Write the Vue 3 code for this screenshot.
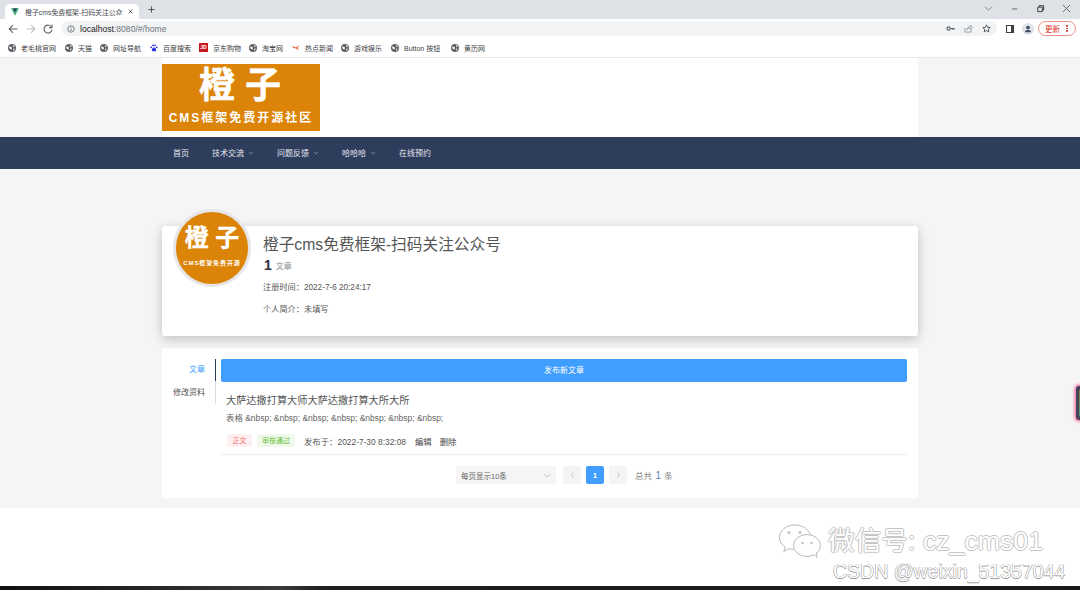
<script setup>
const bookmarks = [
  { name: '老毛桃官网', icon: 'globe', width: 57 },
  { name: '天猫', icon: 'globe', width: 35 },
  { name: '网址导航', icon: 'globe', width: 50 },
  { name: '百度搜索', icon: 'baidu', width: 49 },
  { name: '京东购物', icon: 'jd', width: 50 },
  { name: '淘宝网', icon: 'globe', width: 43 },
  { name: '热点新闻', icon: 'news', width: 49 },
  { name: '游戏娱乐', icon: 'globe', width: 50 },
  { name: 'Button 按钮', icon: 'globe', width: 60 },
  { name: '黄历网', icon: 'globe', width: 40 },
]
const navItems = [
  { name: '首页', width: 39, arrow: false },
  { name: '技术交流', width: 65, arrow: true },
  { name: '问题反馈', width: 65, arrow: true },
  { name: '哈哈哈', width: 57, arrow: true },
  { name: '在线预约', width: 40, arrow: false },
]
const nbsp = '表格 &nbsp; &nbsp; &nbsp; &nbsp; &nbsp; &nbsp; &nbsp;'
</script>

<template>
  <div class="screen">
    <header class="browser">
      <div class="tabstrip">
        <div class="tab">
          <svg class="vue-icon" viewBox="0 0 12 11"><path d="M0 0h12L6 11z" fill="#41b883" /><path d="M2.600 0h6.800L6 6.200z" fill="#35495e" /></svg>
          <span class="tab-title">橙子cms免费框架-扫码关注公众</span>
          <svg class="tab-close" viewBox="0 0 8 8"><path d="M1 1l6 6M7 1L1 7" stroke="#3c4043" stroke-width="1.200" /></svg>
        </div>
        <svg class="new-tab" viewBox="0 0 10 10"><path d="M5 .5v9M.5 5h9" stroke="#3c4043" stroke-width="1.200" /></svg>
        <div class="window-btns">
          <svg viewBox="0 0 10 10"><path d="M1 3l4 4 4-4" fill="none" stroke="#80868b" /></svg>
          <svg viewBox="0 0 10 10"><path d="M2 5.500h6" stroke="#5f6368" /></svg>
          <svg viewBox="0 0 10 10"><path d="M2 3.500h5v5H2zM3.500 3.500V1.800h5v5H7" fill="none" stroke="#3c4043" stroke-width="1.100" /></svg>
          <svg viewBox="0 0 10 10"><path d="M1 1l8 8M9 1L1 9" stroke="#5f6368" /></svg>
        </div>
      </div>
      <div class="toolbar">
        <svg class="tool" viewBox="0 0 10 10"><path d="M9.500 5H1.500M5 1.200L1.200 5 5 8.800" fill="none" stroke="#5f6368" stroke-width="1.100" /></svg>
        <svg class="tool" viewBox="0 0 10 10"><path d="M.5 5h8M5 1.200L8.800 5 5 8.800" fill="none" stroke="#bdc1c6" stroke-width="1.100" /></svg>
        <svg class="tool" viewBox="0 0 10 10"><path d="M9 5.500A4 4 0 1 1 8 2.400M9 .6v3H6" fill="none" stroke="#5f6368" stroke-width="1.100" /></svg>
        <div class="address">
          <svg class="info" viewBox="0 0 10 10"><circle cx="5" cy="5" r="4" fill="none" stroke="#5f6368" /><path d="M5 4.300V7.500M5 2.500v1" stroke="#5f6368" /></svg>
          <span class="url"><b>localhost</b>:8080/#/home</span>
          <span class="address-tools">
            <svg viewBox="0 0 10 10"><circle cx="2.800" cy="5" r="1.800" fill="none" stroke="#5f6368" stroke-width="1.300" /><path d="M4.500 5H9.500M7.500 5v1.500M9 5v1.500" stroke="#5f6368" stroke-width="1.200" /></svg>
            <svg viewBox="0 0 10 10"><path d="M1 4.500V9h7V6.500M3 6.500C3.500 4 5 3 7 3V1.200L9.500 3.800 7 6.200V4.500C5.500 4.500 4 5 3 6.500z" fill="none" stroke="#80868b" stroke-width=".8" /></svg>
            <svg viewBox="0 0 10 10"><path d="M5 1l1.200 2.700 2.900.3-2.200 1.900.7 2.900L5 7.300 2.400 8.800l.7-2.900L.9 4l2.900-.3z" fill="none" stroke="#3c4043" stroke-width=".9" /></svg>
          </span>
        </div>
        <svg class="side-panel" viewBox="0 0 10 10"><path d="M1.500 1.500h7v7h-7z" fill="none" stroke="#3c4043" stroke-width="1.100" /><path d="M6 1.500h2.500v7H6z" fill="#3c4043" /></svg>
        <svg class="avatar-mini" viewBox="0 0 12 12"><circle cx="6" cy="6" r="6" fill="#dfe3ea" /><circle cx="6" cy="4.600" r="1.800" fill="#3c4a63" /><path d="M2.800 9.200C3 7.500 4.500 7 6 7s3 .5 3.200 2.200z" fill="#3c4a63" /></svg>
        <div class="update">更新<span class="dots"><i></i><i></i><i></i></span></div>
      </div>
      <div class="bookmarks">
        <div v-for="b in bookmarks" :key="b.name" class="bookmark" :style="{ width: b.width + 'px' }">
          <svg v-if="b.icon === 'globe'" class="bm-icon" viewBox="0 0 8 8"><circle cx="4" cy="4" r="4" fill="#5f6368" /><path d="M1.200 2.200L4 3.500 3.500 5.500 1.500 4.500zM5 .8l2 1.500-1.500 1zM5 5l1.800-.5L5.500 7z" fill="#fff" /></svg>
          <svg v-else-if="b.icon === 'baidu'" class="bm-icon" viewBox="0 0 8 8"><path d="M4 3.500C5.500 3.500 6.500 5.500 6 6.800 5.500 7.800 4.800 7 4 7s-1.500.8-2-.2C1.500 5.500 2.500 3.500 4 3.500z" fill="#2932e1" /><circle cx="1.200" cy="3.300" r=".9" fill="#2932e1" /><circle cx="3" cy="1.300" r=".9" fill="#2932e1" /><circle cx="5" cy="1.300" r=".9" fill="#2932e1" /><circle cx="6.800" cy="3.300" r=".9" fill="#2932e1" /></svg>
          <span v-else-if="b.icon === 'jd'" class="bm-icon jd">JD</span>
          <svg v-else class="bm-icon" viewBox="0 0 8 8"><path d="M0 2l4 1.500L7.500 1 5.500 4 7 6.500 4 4.500 1.500 4z" fill="#f0642a" /></svg>
          <span class="bm-name">{{ b.name }}</span>
        </div>
      </div>
    </header>

    <div class="site-head">
      <div class="head-inner">
        <div class="logo">
          <div class="logo-big">橙 子</div>
          <div class="logo-small">CMS框架免费开源社区</div>
        </div>
      </div>
    </div>

    <nav class="site-nav">
      <div class="nav-inner">
        <div v-for="n in navItems" :key="n.name" class="nav-item" :style="{ width: n.width + 'px' }">
          {{ n.name }}
          <svg v-if="n.arrow" class="nav-arrow" viewBox="0 0 6 4"><path d="M.8 .8L3 3l2.200-2.200" fill="none" stroke="#9aa3b5" stroke-width=".7" /></svg>
        </div>
      </div>
    </nav>

    <main class="content">
      <section class="profile">
        <div class="avatar">
          <div class="avatar-big">橙 子</div>
          <div class="avatar-small">CMS框架免费开源</div>
        </div>
        <h1 class="profile-title">橙子cms免费框架-扫码关注公众号</h1>
        <div class="stat"><strong>1</strong><span>文章</span></div>
        <p class="profile-line">注册时间：2022-7-6 20:24:17</p>
        <p class="profile-line">个人简介：未填写</p>
      </section>

      <section class="panel">
        <div class="side-tabs">
          <div class="side-tab active">文章</div>
          <div class="side-tab">修改资料</div>
        </div>
        <div class="panel-main">
          <div class="publish">发布新文章</div>
          <article class="post">
            <h2 class="post-title">大萨达撒打算大师大萨达撒打算大所大所</h2>
            <p class="post-text">{{ nbsp }}</p>
            <div class="post-meta">
              <span class="tag tag-red">正文</span>
              <span class="tag tag-green">审核通过</span>
              <span class="date">发布于：2022-7-30 8:32:08</span>
              <span class="act">编辑</span>
              <span class="act">删除</span>
            </div>
          </article>
          <div class="pager">
            <div class="page-size">每页显示10条
              <svg viewBox="0 0 8 5"><path d="M1 1l3 3 3-3" fill="none" stroke="#b4b7bd" stroke-width=".8" /></svg>
            </div>
            <div class="page-btn"><svg viewBox="0 0 5 8"><path d="M3.500 1.500L1.500 4l2 2.500" fill="none" stroke="#b5b9c2" stroke-width=".8" /></svg></div>
            <div class="page-btn current">1</div>
            <div class="page-btn"><svg viewBox="0 0 5 8"><path d="M1.500 1.500l2 2.500-2 2.500" fill="none" stroke="#b5b9c2" stroke-width=".8" /></svg></div>
            <div class="total">总共 <em>1</em> 条</div>
          </div>
        </div>
      </section>
    </main>

    <div class="blank"></div>
    <div class="taskbar"></div>

    <div class="side-widget"></div>
    <div class="watermark">
      <svg class="wechat" viewBox="0 0 44 36">
        <path d="M17 2C8 2 1.500 7.500 1.500 14.500c0 4 2.200 7.300 5.700 9.500l-1.400 4.500 5.200-2.800c1.500.4 3 .7 4.500.8" fill="#fff" stroke="#b9b9b9" stroke-width="1" />
        <path d="M17 2c8 0 14.500 4.800 15.500 11" fill="none" stroke="#b9b9b9" stroke-width="1" />
        <ellipse cx="29" cy="22.500" rx="13.500" ry="11" fill="#fff" stroke="#b9b9b9" stroke-width="1" />
        <path d="M36 31.500l3 3-.5-5" fill="#fff" stroke="#b9b9b9" stroke-width="1" />
        <circle cx="11" cy="9.500" r="1.600" fill="#c4c4c4" /><circle cx="22" cy="9.500" r="1.600" fill="#c4c4c4" />
        <circle cx="24.500" cy="20" r="1.300" fill="#c4c4c4" /><circle cx="33.500" cy="20" r="1.300" fill="#c4c4c4" />
      </svg>
      <div class="wm-line1">微信号: cz_cms01</div>
      <div class="wm-line2">CSDN @weixin_51357044</div>
    </div>
  </div>
</template>

<style>
html, body { margin: 0; background: #fff; }
</style>

<style scoped>
.screen {
  position: relative;
  width: 1080px;
  height: 590px;
  overflow: hidden;
  display: flex;
  flex-direction: column;
  font-family: "Liberation Sans", "Noto Sans CJK SC", sans-serif;
  color: #333;
  background: #fff;
}
svg { display: block; flex: none; }

/* browser chrome */
.browser { flex: none; }
.tabstrip { height: 19px; background: #dee1e6; display: flex; align-items: flex-end; padding-left: 5px; }
.tab { width: 134px; height: 15px; background: #fff; border-radius: 5px 5px 0 0; display: flex; align-items: center; padding: 0 6px; box-sizing: border-box; }
.vue-icon { width: 8px; height: 8px; margin-right: 6px; }
.tab-title { flex: 1; min-width: 0; font-size: 6.900px; color: #45494e; white-space: nowrap; }
.tab-close { width: 5px; height: 5px; margin-left: 3px; }
.new-tab { width: 7px; height: 7px; margin: 0 0 6px 9px; }
.window-btns { margin-left: auto; display: flex; align-items: center; gap: 17px; padding: 0 9px 2px 0; align-self: center; }
.window-btns svg { width: 9px; height: 9px; }
.toolbar { height: 19px; background: #fff; display: flex; align-items: center; padding: 0 4px 0 8px; }
.tool { width: 10px; height: 10px; margin-right: 7.500px; }
.address { width: 936px; height: 15px; margin-left: .5px; border-radius: 8px; background: #f1f3f4; display: flex; align-items: center; box-sizing: border-box; padding: 0 6px; }
.info { width: 8px; height: 8px; }
.url { font-size: 8.600px; color: #70757a; margin-left: 5px; }
.url b { color: #202124; font-weight: 400; }
.address-tools { margin-left: auto; display: flex; gap: 9px; }
.address-tools svg { width: 9px; height: 9px; }
.side-panel { width: 10px; height: 10px; margin-left: 8px; }
.avatar-mini { width: 12px; height: 12px; margin-left: 7px; }
.update { width: 38px; height: 15px; margin-left: 4px; border: 1px solid #ee8d86; border-radius: 8px; box-sizing: border-box; color: #d93025; font-size: 7.500px; display: flex; align-items: center; padding-left: 6px; }
.dots { margin-left: 6px; display: flex; flex-direction: column; gap: 1px; }
.dots i { display: block; width: 1.500px; height: 1.500px; border-radius: 50%; background: #d93025; }
.bookmarks { height: 20px; display: flex; align-items: center; padding-left: 8px; border-bottom: 1px solid #e8e8e8; box-sizing: border-box; }
.bookmark { display: flex; align-items: center; flex: none; }
.bm-icon { width: 8px; height: 8px; margin-right: 5px; }
.bm-name { font-size: 7px; color: #3c4043; white-space: nowrap; }
.jd { background: #c91623; color: #fff; font-size: 5px; font-weight: 700; width: 9px; height: 9px; line-height: 9px; text-align: center; flex: none; margin-right: 5px; }

/* site header */
.site-head { background: #f5f5f5; flex: none; }
.head-inner { width: 756px; height: 79px; margin-left: 162px; background: #fff; box-sizing: border-box; padding-top: 6px; }
.logo { width: 158px; height: 67px; background: #db8407; color: #fff; text-align: center; font-weight: 700; overflow: hidden; }
.logo-big { font-size: 36px; line-height: 44px; margin-left: -2px; -webkit-text-stroke: .5px #fff; }
.logo-small { font-size: 12px; line-height: 15px; letter-spacing: 2px; margin-top: 3px; white-space: nowrap; }
.site-nav { height: 32px; flex: none; background: #2f3d5d; }
.nav-inner { margin-left: 173px; height: 31px; display: flex; align-items: center; }
.nav-item { flex: none; font-size: 8px; color: #e6e8ee; display: flex; align-items: center; white-space: nowrap; }
.nav-arrow { width: 6px; height: 4px; margin-left: 4px; }

/* content */
.content { flex: none; background: #f5f5f5; padding: 57px 0 10px 162px; }
.profile { position: relative; width: 756px; height: 110px; box-sizing: border-box; padding: 9px 0 0 101px; background: #fff; border-radius: 3px; box-shadow: 0 3px 12px rgba(0, 0, 0, 0.22); }
.avatar { position: absolute; left: 11px; top: -17px; width: 72px; height: 72px; border: 3px solid #e6e6e6; border-radius: 50%; background: #db8407; color: #fff; font-weight: 700; text-align: center; overflow: hidden; }
.avatar-big { font-size: 24px; line-height: 26px; margin-top: 13px; -webkit-text-stroke: .3px #fff; }
.avatar-small { font-size: 6px; line-height: 8px; margin-top: 8px; letter-spacing: .9px; white-space: nowrap; }
.profile-title { margin: 0; font-size: 15.700px; line-height: 19px; font-weight: 400; color: #555; white-space: nowrap; }
.stat { display: flex; align-items: center; height: 18px; margin-top: 2px; }
.stat strong { font-size: 14px; color: #2c3142; margin: 0 4px 0 1px; }
.stat span { font-size: 8px; color: #8b8b8b; }
.profile-line { margin: 0 0 12px; font-size: 8.200px; line-height: 10px; color: #555; white-space: nowrap; }
.stat + .profile-line { margin-top: 9px; }

.panel { width: 756px; height: 150px; margin-top: 12px; background: #fff; display: flex; box-sizing: border-box; padding: 11px 11px 0 0; }
.side-tabs { width: 53px; height: 45px; border-right: 1px solid #d8dce3; flex: none; position: relative; }
.side-tabs::before { content: ""; position: absolute; right: -1px; top: 0; height: 22px; width: 1px; background: #2f3d5d; }
.side-tab { height: 22px; line-height: 22px; font-size: 8px; color: #555; text-align: right; padding-right: 10px; white-space: nowrap; }
.side-tab + .side-tab { margin-top: 1px; }
.side-tab.active { color: #409eff; }
.panel-main { margin-left: 5px; flex: 1; min-width: 0; }
.publish { height: 23px; background: #409eff; border-radius: 2px; color: #fff; font-size: 8px; line-height: 23px; text-align: center; }
.post { padding: 12px 0 0 5px; height: 73px; box-sizing: border-box; border-bottom: 1px solid #ececec; }
.post-title { margin: 0; font-size: 10.200px; line-height: 14px; font-weight: 400; color: #555; white-space: nowrap; }
.post-text { margin: 5px 0 0; font-size: 8.450px; line-height: 11px; color: #666; white-space: nowrap; }
.post-meta { display: flex; align-items: center; margin-top: 10px; height: 13px; font-size: 8.400px; color: #555; }
.tag { height: 13px; line-height: 13px; font-size: 7px; text-align: center; border-radius: 2px; flex: none; margin-left: 1px; }
.tag-red { width: 25px; background: #fef0f0; color: #f56c6c; }
.tag-green { width: 38px; background: #f0f9eb; color: #67c23a; margin-left: 5px; }
.date { margin-left: 9px; white-space: nowrap; }
.act { margin-left: 8px; white-space: nowrap; color: #444; }
.date + .act { margin-left: 9px; }
.pager { display: flex; align-items: center; height: 18px; margin: 11px 0 0 235px; }
.page-size { width: 100px; height: 18px; box-sizing: border-box; padding: 0 5px; background: #f5f5f5; font-size: 7.500px; color: #666; display: flex; align-items: center; justify-content: space-between; margin-right: 7px; }
.page-size svg { width: 8px; height: 5px; }
.page-btn { width: 18px; height: 18px; border-radius: 2px; background: #f4f4f5; display: flex; align-items: center; justify-content: center; margin-right: 5px; font-size: 8px; font-weight: 700; }
.page-btn svg { width: 5px; height: 8px; }
.page-btn.current { background: #409eff; color: #fff; }
.total { margin-left: 3px; font-size: 8.500px; color: #888; white-space: nowrap; }
.total em { font-style: normal; color: #5b7fb5; font-size: 10px; margin: 0 1px; }

.blank { flex: 1; background: #fff; }
.taskbar { height: 4px; flex: none; background: linear-gradient(90deg, #101010 0, #3a3a3a 26%, #1f1f1f 30%, #1a1a1a 100%); }

/* overlays */
.side-widget { position: absolute; right: -4px; top: 386px; width: 8px; height: 34px; border-radius: 3px; background: linear-gradient(180deg, #8a7a40, #4f9a80) center / 3px 26px no-repeat #45465a; box-shadow: 0 0 3px 1.500px #ff6fa8; }
.watermark { position: absolute; left: 0; top: 0; width: 100%; height: 100%; pointer-events: none; }
.wechat { position: absolute; left: 778px; top: 523px; width: 44px; height: 36px; }
.wm-line1 { position: absolute; left: 828px; top: 524px; font-size: 26.700px; line-height: 34px; color: #fff; white-space: nowrap; text-shadow: -1px 0 0 #c4c4c4, 1px 0 0 #c4c4c4, 0 -1px 0 #c4c4c4, 0 1px 0 #c4c4c4; }
.wm-line2 { position: absolute; left: 833px; top: 560px; font-size: 19.500px; line-height: 22px; color: #fff; white-space: nowrap; text-shadow: -.5px 0 0 #9c9c9c, .5px 0 0 #9c9c9c, 0 -.5px 0 #9c9c9c, 0 .5px 0 #9c9c9c; }
</style>
